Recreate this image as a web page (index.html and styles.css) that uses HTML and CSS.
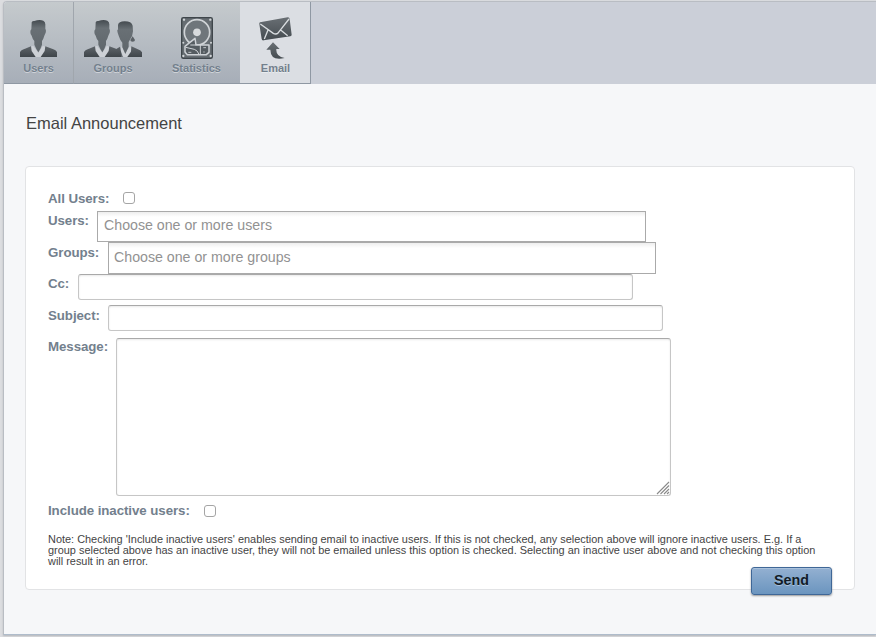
FILE: index.html
```html
<!DOCTYPE html>
<html lang="en">
<head>
<meta charset="utf-8">
<title>Email Announcement</title>
<link rel="stylesheet" href="styles.css">
</head>
<body>
<svg class="defs" width="0" height="0" aria-hidden="true">
  <defs>
    <linearGradient id="ink" x1="0" y1="0" x2="0" y2="1"><stop offset="0" stop-color="#454b50"/><stop offset=".25" stop-color="#697075"/><stop offset="1" stop-color="#5f666b"/></linearGradient>
    <linearGradient id="suit" x1="0" y1="0" x2="0" y2="1"><stop offset="0" stop-color="#5f656a"/><stop offset="1" stop-color="#3f454a"/></linearGradient>
    <linearGradient id="mail" x1="0" y1="0" x2="0" y2="1"><stop offset="0" stop-color="#696f74"/><stop offset="1" stop-color="#444b50"/></linearGradient>
    <g id="man">
      <path d="M40 78 34 79 31 93 42 111H66L77 93 74 79 68 78 55 98Z" fill="#cdd1d6"/>
      <path d="M35 9Q34 2 43 3Q58-2 70 2Q77 5 76 16V26Q79 30 77 38L73 47Q70 58 66 63V74Q62 86 55 97Q48 86 43 74V63Q38 58 35 47Q31 43 31 36Q31 30 34 28Z" fill="url(#ink)"/>
      <path d="M0 111V97Q2 90 15 86L33 79 35 93 47 111ZM111 111V97Q109 90 96 86L76 79 74 93 62 111Z" fill="url(#suit)"/>
    </g>
  </defs>
</svg>
<main class="page">
  <nav class="tabs">
    <a class="tab users">
      <svg width="37" height="37" viewBox="0 0 111 111"><use href="#man"/></svg>
      <span>Users</span>
    </a>
    <a class="tab groups">
      <svg width="59" height="37" viewBox="0 0 177 111">
        <use href="#man"/>
        <path d="M113 78 110 90 118 111H130L143 90 138 78 124 100Z" fill="#cdd1d6"/>
        <path d="M102 15Q104 4 122 4Q143 4 146 17L147 34Q146 48 139 57L134 66V80L124 102 115 82V68Q108 60 104 47L101 38Q98 31 102 28Z" fill="url(#ink)"/>
        <path d="M146 49 153 60Q153 65 146 65Q139 65 139 60Z" fill="#5b6166"/>
        <path d="M174 111V97Q172 91 160 87L142 79 141 95 130 111ZM98 86 108 80 111 96 116 111H112Q113 96 98 90Z" fill="url(#suit)"/>
      </svg>
      <span>Groups</span>
    </a>
    <a class="tab statistics">
      <svg width="32" height="42" viewBox="0 0 96 126">
        <rect x="2" y="2" width="92" height="122" rx="5" fill="#666d72" stroke="#3f464b" stroke-width="4"/>
        <circle cx="48" cy="46" r="38" fill="#6f767b" stroke="#d0d4d7" stroke-width="5"/>
        <path d="M12 88 42 64 45 84H84V106L76 113H19L12 105Z" fill="#555c61" stroke="#cfd3d7" stroke-width="4.500" stroke-linejoin="round"/>
        <path d="M45 84H28M58 84V112M14 91 40 97Q50 100 54 112" fill="none" stroke="#cfd3d7" stroke-width="3"/>
        <circle cx="48" cy="46" r="11.500" fill="#d8dbdd"/>
        <g fill="#d0d4d7"><circle cx="9" cy="8" r="3.500"/><circle cx="88" cy="8" r="3.500"/><circle cx="7" cy="117" r="3.500"/><circle cx="89" cy="117" r="3.500"/><circle cx="7" cy="77" r="3"/><circle cx="90" cy="77" r="3"/></g>
        <path d="M22 106H31M67 92H75M67 105H71" stroke="#c0c5c8" stroke-width="3"/>
      </svg>
      <span>Statistics</span>
    </a>
    <a class="tab email active">
      <svg width="33" height="42" viewBox="0 0 99 126">
        <path d="M3 16 86 1Q91 0 92 6L98 53Q98 57 94 58L14 70Q9 71 8 66L1 22Q0 17 3 16Z" fill="url(#mail)"/>
        <path d="M4 21 43 49Q51 54 58 47L90 6M16 66 27 39M65 39 86 56" fill="none" stroke="#d8dcdf" stroke-width="4"/>
        <path d="M42 76 62 96H52Q50 118 77 123Q35 133 34 98H22Z" fill="url(#mail)"/>
      </svg>
      <span>Email</span>
    </a>
  </nav>
  <h1>Email Announcement</h1>
  <form class="card">
    <div class="row all"><label for="all">All Users:</label><input type="checkbox" id="all"></div>
    <div class="row chooser"><label>Users:</label><div class="choice">Choose one or more users</div></div>
    <div class="row chooser second"><label>Groups:</label><div class="choice">Choose one or more groups</div></div>
    <div class="row cc"><label for="cc">Cc:</label><input class="field" type="text" id="cc"></div>
    <div class="row subject"><label for="subject">Subject:</label><input class="field" type="text" id="subject"></div>
    <div class="row message"><label for="message">Message:</label>
      <div class="area"><textarea class="field" id="message"></textarea>
        <svg class="grip" width="14" height="14" viewBox="0 0 14 14"><path d="M1 13 13 1M4.500 13 13 4.500M8 13 13 8M11 13 13 11" stroke="#8a8a8a" stroke-width="1.100"/></svg>
      </div>
    </div>
    <div class="row inactive"><label for="inactive">Include inactive users:</label><input type="checkbox" id="inactive"></div>
    <p class="note">Note: Checking 'Include inactive users' enables sending email to inactive users. If this is not checked, any selection above will ignore inactive users. E.g. If a<br>group selected above has an inactive user, they will not be emailed unless this option is checked. Selecting an inactive user above and not checking this option<br>will result in an error.</p>
    <button class="send" type="button">Send</button>
  </form>
</main>
</body>
</html>
```
FILE: styles.css
```css
* { box-sizing: border-box; }
body {
  margin: 0;
  height: 637px;
  overflow: hidden;
  padding: 1px 0 0 3px;
  background: #dcdde0;
  font-family: "Liberation Sans", Arial, sans-serif;
  color: #444;
}
.defs { display: block; }
.page {
  height: 634px;
  border: 1px solid #b9bdc3;
  border-right: 0;
  border-bottom-color: #afbccb;
  border-radius: 4px 0 0 0;
  background: #f6f7f9;
  box-shadow: 0 1px 2px #b5b8bc;
  overflow: hidden;
}
.tabs { display: flex; height: 82px; background: #cbcfd8; }
.tab {
  display: flex;
  flex-direction: column;
  align-items: center;
  justify-content: flex-end;
  height: 82px;
  padding-bottom: 8px;
  border-bottom: 1px solid #8f98a3;
  background: linear-gradient(#c5cacd, #a7aeb8);
  color: #73808d;
  font-size: 11px;
  font-weight: bold;
  line-height: 13px;
  text-shadow: 0 1px 0 rgba(255, 255, 255, .45);
}
.tab svg { display: block; margin-bottom: 5px; }
.users { width: 70px; border-right: 1px solid #a0a6ad; }
.groups { width: 78px; }
.statistics { width: 88px; padding-left: 1px; }
.statistics svg, .email svg { margin-bottom: 3px; }
.email { width: 71px; padding-left: 1px; border-right: 1px solid #8f98a3; }
.tab.active { background: #dbdee3; }
h1 {
  margin: 29px 0 0 22px;
  font-size: 16.5px;
  font-weight: normal;
  line-height: 20px;
}
.card {
  width: 830px;
  height: 424px;
  margin: 33px 0 0 21px;
  padding: 24px 22px 0;
  border: 1px solid #e2e3e5;
  border-radius: 4px;
  background: #fff;
}
.row { display: flex; align-items: flex-start; }
label {
  color: #73808d;
  font-size: 13.3px;
  font-weight: bold;
  line-height: 16px;
  letter-spacing: -.07px;
  white-space: nowrap;
}
input[type="checkbox"] {
  appearance: none;
  width: 12px;
  height: 12px;
  margin: 2px 0 0;
  border: 1px solid #a5a5a5;
  border-radius: 3px;
  background: #fff;
}
.all { height: 20px; }
.all label { width: 75px; }
.all input[type="checkbox"] { margin-top: 1px; }
.chooser { height: 31px; }
.chooser label { width: 49px; padding-top: 2px; }
.second { height: 32px; }
.second label { width: 60px; padding-top: 3px; }
.choice {
  width: 549px;
  height: 31px;
  padding-left: 6px;
  border: 1px solid #aaa;
  background: linear-gradient(#eee, #fff 5px);
  color: #929292;
  font-size: 14.2px;
  line-height: 26px;
}
.second .choice { width: 548px; height: 32px; padding-left: 5px; line-height: 28px; }
.field {
  display: block;
  width: 555px;
  height: 26px;
  margin: 0;
  border: 1px solid #c6c6c6;
  border-top-color: #a9a9a9;
  border-radius: 3px;
  background: #fff;
  box-shadow: inset 0 1px 2px #e9e9e9;
}
.cc { height: 31px; }
.cc label { width: 30px; padding-top: 2px; }
.subject { height: 33px; }
.subject label { width: 60px; padding-top: 3px; }
.message { height: 158px; }
.message label { width: 68px; padding-top: 1px; }
.area { position: relative; }
.area .field { height: 158px; resize: none; }
.grip { position: absolute; right: 1px; bottom: 1px; fill: none; }
.inactive { padding-top: 7px; }
.inactive label { width: 156px; }
.note { margin: 15px 0 0; font-size: 10.93px; line-height: 11px; white-space: nowrap; }
.send {
  display: block;
  width: 81px;
  height: 28px;
  margin: 0 0 0 auto;
  padding: 0 0 3px;
  border: 1px solid #3f6797;
  border-radius: 3px;
  background: linear-gradient(#93b0d1, #6b95bf);
  box-shadow: 0 1px 2px #999, inset 0 1px 0 #a9c1dc;
  color: #111b27;
  font: bold 14.3px "Liberation Sans", Arial, sans-serif;
  text-shadow: 0 1px 0 #a9c1dc;
}
```
